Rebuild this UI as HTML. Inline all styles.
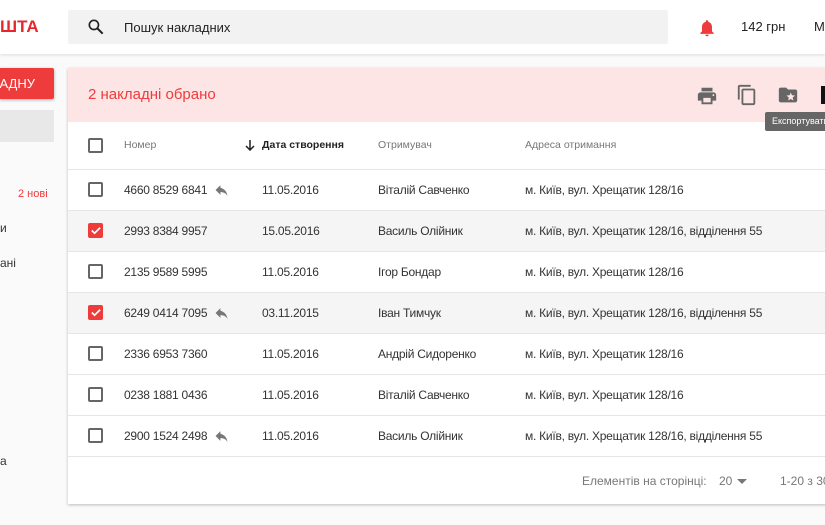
<!DOCTYPE html>
<html><head><meta charset="utf-8"><style>
*{box-sizing:border-box;margin:0;padding:0}
body{width:825px;height:525px;overflow:hidden;background:#fafafa;font-family:"Liberation Sans",sans-serif;position:relative;color:#333}
.abs{position:absolute}
.hdr{left:0;top:0;width:825px;height:54px;background:#fff;box-shadow:0 1px 3px rgba(0,0,0,.12)}
.card{left:68px;top:68px;width:780px;height:436px;background:#fff;box-shadow:0 1px 3px rgba(0,0,0,.25)}
.row{position:absolute;left:0;width:780px;height:41px;border-bottom:1px solid #e6e6e6;font-size:12px;color:#333;letter-spacing:-0.25px}
.row span{position:absolute;top:13px;white-space:nowrap}
.cb{position:absolute;left:20px;top:12px;width:15px;height:15px;border:2px solid #666;border-radius:2px}
.cb.on{background:#ee3b3b;border-color:#ee3b3b}
.rep{display:inline-block;margin-left:8px;vertical-align:-2px}
</style></head><body>
<div class="abs hdr"></div>
<div class="abs" style="left:0;top:17px;font-size:17px;font-weight:bold;color:#e8262b">ШТА</div>
<div class="abs" style="left:68px;top:10px;width:600px;height:34px;background:#f2f2f2;border-radius:2px"></div>
<svg class="abs" style="left:86px;top:17px" width="20" height="20" viewBox="0 0 24 24"><circle cx="9.5" cy="9.5" r="5.5" fill="none" stroke="#222" stroke-width="2"/><path d="M13.5 13.5L20 20" stroke="#222" stroke-width="2.4"/></svg>
<div class="abs" style="left:124px;top:20px;font-size:13px;color:#222">Пошук накладних</div>
<svg class="abs" style="left:697px;top:18px" width="20" height="20" viewBox="0 0 24 24"><path fill="#ee3b3b" d="M12 22a2 2 0 0 0 2-2h-4a2 2 0 0 0 2 2zm6-6v-5c0-3.1-1.6-5.6-4.5-6.3V4a1.5 1.5 0 0 0-3 0v.7C7.6 5.4 6 7.9 6 11v5l-2 2v1h16v-1z"/></svg>
<div class="abs" style="left:741px;top:19px;font-size:13px;color:#222">142 грн</div>
<div class="abs" style="left:814px;top:19px;font-size:13px;color:#222">Ми</div>

<div class="abs" style="left:0;top:68px;width:54px;height:31px;background:#ee3b3b;border-radius:0 2px 2px 0;box-shadow:0 1px 3px rgba(0,0,0,.3);color:#fff;font-size:13px"><span style="position:absolute;right:19px;top:8px">АДНУ</span></div>
<div class="abs" style="left:0;top:110px;width:54px;height:32px;background:#e8e8e8"></div>
<div class="abs" style="left:18px;top:188px;font-size:11px;color:#ee3b3b">2 нові</div>
<div class="abs" style="left:0;top:221px;font-size:12px">и</div>
<div class="abs" style="left:0;top:256px;font-size:12px">ані</div>
<div class="abs" style="left:0;top:454px;font-size:12px">а</div>

<div class="abs card">
 <div class="abs" style="left:0;top:0;width:780px;height:54px;background:#fde5e5"></div>
 <div class="abs" style="left:20px;top:18px;font-size:15px;color:#ee3b3b">2 накладні обрано</div>
 <svg class="abs" style="left:628px;top:17px" width="22" height="22" viewBox="0 0 24 24"><path fill="#666" d="M19 8H5c-1.7 0-3 1.3-3 3v6h4v4h12v-4h4v-6c0-1.7-1.3-3-3-3zm-3 11H8v-5h8zm3-7a1 1 0 1 1 0-2 1 1 0 0 1 0 2zM18 3H6v4h12z"/></svg>
 <svg class="abs" style="left:668px;top:16px" width="22" height="22" viewBox="0 0 24 24"><path fill="#666" d="M16 1H4c-1.1 0-2 .9-2 2v14h2V3h12zm3 4H8c-1.1 0-2 .9-2 2v14c0 1.1.9 2 2 2h11c1.1 0 2-.9 2-2V7c0-1.1-.9-2-2-2zm0 16H8V7h11z"/></svg>
 <svg class="abs" style="left:709px;top:16px" width="22" height="22" viewBox="0 0 24 24"><path fill="#666" d="M20 6h-8l-2-2H4c-1.1 0-2 .9-2 2v12c0 1.1.9 2 2 2h16c1.1 0 2-.9 2-2V8c0-1.1-.9-2-2-2zm-2.1 12L15 16.3 12.1 18l.8-3.2-2.5-2.2 3.3-.3L15 9.3l1.3 3 3.3.3-2.5 2.2z"/></svg>
 <div class="abs" style="left:753px;top:18px;width:10px;height:18px;background:#111"></div>
 <div class="abs" style="left:697px;top:44px;width:90px;height:19px;background:#666;border-radius:2px;color:#fff;font-size:9px;padding:4px 0 0 7px;white-space:nowrap">Експортувати</div>

 <div class="row" style="top:54px;height:48px;font-size:10.5px;color:#777;letter-spacing:0">
  <div class="cb" style="top:16px"></div>
  <span style="left:56px;top:17px">Номер</span>
  <svg class="abs" style="left:176px;top:17px" width="12" height="12" viewBox="0 0 12 12"><path d="M6 1v10M2 7l4 4 4-4" stroke="#222" stroke-width="1.5" fill="none"/></svg>
  <span style="left:194px;top:17px;color:#222;font-weight:bold">Дата створення</span>
  <span style="left:310px;top:17px">Отримувач</span>
  <span style="left:457px;top:17px">Адреса отримання</span>
 </div>
 <div class="row" style="top:102px"><div class="cb"></div><span style="left:56px">4660 8529 6841<svg class="rep" width="13" height="11" viewBox="0 0 24 20"><path fill="#777" d="M10 5V0L1 9l9 9v-5c6 0 10 2 13 7-1-7-5-13-13-15z"/></svg></span><span style="left:194px">11.05.2016</span><span style="left:310px">Віталій Савченко</span><span style="left:457px">м. Київ, вул. Хрещатик 128/16</span></div>
 <div class="row" style="top:143px;background:#f5f5f5"><div class="cb on"><svg width="11" height="11" viewBox="0 0 12 12" style="position:absolute;left:0;top:0"><path d="M2 6l3 3 6-6" stroke="#fff" stroke-width="1.8" fill="none"/></svg></div><span style="left:56px">2993 8384 9957</span><span style="left:194px">15.05.2016</span><span style="left:310px">Василь Олійник</span><span style="left:457px">м. Київ, вул. Хрещатик 128/16, відділення 55</span></div>
 <div class="row" style="top:184px"><div class="cb"></div><span style="left:56px">2135 9589 5995</span><span style="left:194px">11.05.2016</span><span style="left:310px">Ігор Бондар</span><span style="left:457px">м. Київ, вул. Хрещатик 128/16</span></div>
 <div class="row" style="top:225px;background:#f5f5f5"><div class="cb on"><svg width="11" height="11" viewBox="0 0 12 12" style="position:absolute;left:0;top:0"><path d="M2 6l3 3 6-6" stroke="#fff" stroke-width="1.8" fill="none"/></svg></div><span style="left:56px">6249 0414 7095<svg class="rep" width="13" height="11" viewBox="0 0 24 20"><path fill="#777" d="M10 5V0L1 9l9 9v-5c6 0 10 2 13 7-1-7-5-13-13-15z"/></svg></span><span style="left:194px">03.11.2015</span><span style="left:310px">Іван Тимчук</span><span style="left:457px">м. Київ, вул. Хрещатик 128/16, відділення 55</span></div>
 <div class="row" style="top:266px"><div class="cb"></div><span style="left:56px">2336 6953 7360</span><span style="left:194px">11.05.2016</span><span style="left:310px">Андрій Сидоренко</span><span style="left:457px">м. Київ, вул. Хрещатик 128/16</span></div>
 <div class="row" style="top:307px"><div class="cb"></div><span style="left:56px">0238 1881 0436</span><span style="left:194px">11.05.2016</span><span style="left:310px">Віталій Савченко</span><span style="left:457px">м. Київ, вул. Хрещатик 128/16</span></div>
 <div class="row" style="top:348px"><div class="cb"></div><span style="left:56px">2900 1524 2498<svg class="rep" width="13" height="11" viewBox="0 0 24 20"><path fill="#777" d="M10 5V0L1 9l9 9v-5c6 0 10 2 13 7-1-7-5-13-13-15z"/></svg></span><span style="left:194px">11.05.2016</span><span style="left:310px">Василь Олійник</span><span style="left:457px">м. Київ, вул. Хрещатик 128/16, відділення 55</span></div>
 <div class="abs" style="left:514px;top:406px;font-size:12px;color:#777">Елементів на сторінці:</div>
 <div class="abs" style="left:651px;top:406px;font-size:12px;color:#777">20</div>
 <div class="abs" style="left:669px;top:411px;width:0;height:0;border-left:5px solid transparent;border-right:5px solid transparent;border-top:5px solid #777"></div>
 <div class="abs" style="left:712px;top:406px;font-size:12px;color:#777;white-space:nowrap">1-20 з 30</div>
</div>
</body></html>
